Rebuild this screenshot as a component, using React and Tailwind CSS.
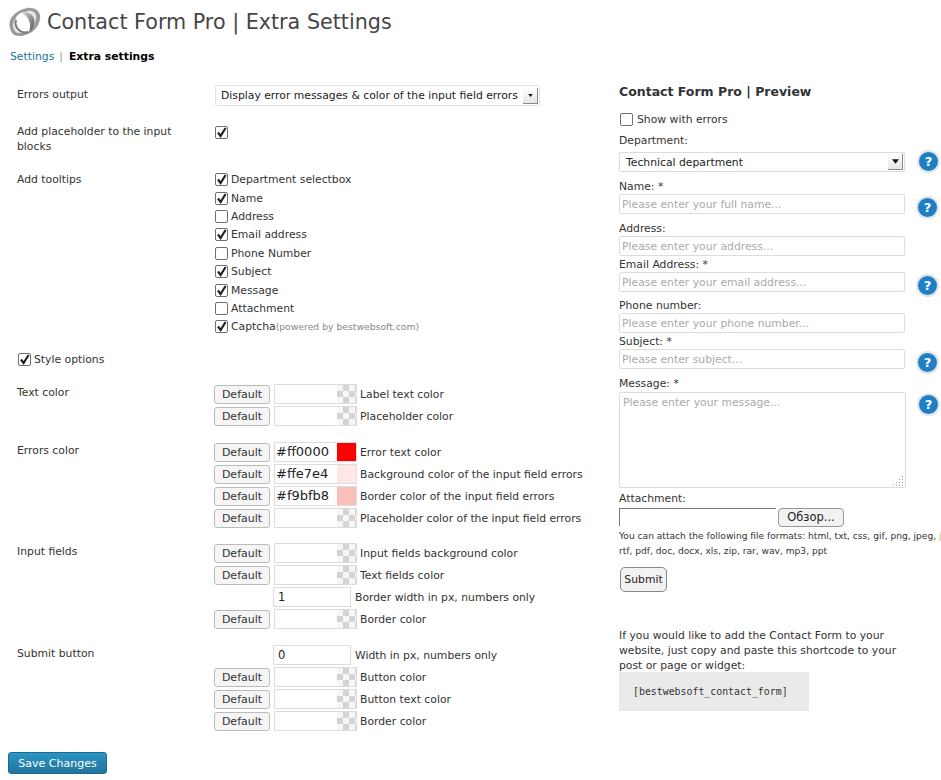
const tooltips = [
    ["Department selectbox", true],
    ["Name", true],
    ["Address", false],
    ["Email address", true],
    ["Phone Number", false],
    ["Subject", true],
    ["Message", true],
    ["Attachment", false],
];

function Box({ checked }) {
    return (
        <span className="flex h-[13px] w-[13px] shrink-0 items-center justify-center rounded-[2px] border border-[#6f6f6f] bg-white">
            {checked && (
                <svg width="11" height="11" viewBox="0 0 11 11" className="shrink-0">
                    <path d="M2 5.5 L4.6 9 L9.6 1" fill="none" stroke="#222" strokeWidth="2.2" />
                </svg>
            )}
        </span>
    );
}

function Logo() {
    return (
        <svg width="33" height="30" viewBox="0 0 33 30" className="shrink-0">
            <defs>
                <linearGradient id="wedge" x1="0" y1="0" x2="1" y2="1">
                    <stop offset="0" stopColor="#d8d8d8" />
                    <stop offset="1" stopColor="#555" />
                </linearGradient>
            </defs>
            <path d="M2 21 C-1 12 8 3 19 1 C28 0 33 5 32 12 C31 21 22 29 11 29 C6 29 3 26 2 21 Z" fill="#9a9a9a" />
            <path d="M5 20 C4 13 11 6 20 4 C26 3 29 7 28 12 C27 19 19 26 11 26 C8 26 6 24 5 20 Z" fill="#e6e6e6" />
            <ellipse cx="17" cy="15" rx="10" ry="10" fill="#fff" transform="rotate(-30 17 15)" />
            <path d="M13 6 C21 3 29 9 26 19 C25 22 23 24 21 25 C24 17 21 9 13 6 Z" fill="url(#wedge)" />
            <path d="M8 13 C6 20 12 27 20 25" fill="none" stroke="#7d7d7d" strokeWidth="2" />
        </svg>
    );
}

function SelectArrow({ className, size }) {
    return (
        <span className={`flex items-center justify-center border-r border-b border-[#8a8a8a] bg-gradient-to-b from-white to-[#e4e4e4] ${className}`}>
            <svg width={size} height={size - 2} viewBox="0 0 6 4">
                <path d="M0 0 H6 L3 4 Z" fill="#111" />
            </svg>
        </span>
    );
}

function DefaultButton() {
    return (
        <button className="h-[19px] w-[56px] shrink-0 rounded-[3px] border border-[#bbb] bg-[#f5f5f5] text-[11px] leading-none text-[#333]">
            Default
        </button>
    );
}

function ColorRow({ value, swatch, label }) {
    return (
        <div className="flex h-[22px] items-center">
            <DefaultButton />
            <div className="ml-1 flex h-[20px] w-[83px] border border-[#ddd] bg-white">
                <span className="flex-1 pl-[1px] text-[13px] leading-[18px] text-[#222]">{value}</span>
                {swatch ? (
                    <span className={`h-full w-[19px] ${swatch}`}></span>
                ) : (
                    <span className="h-full w-[19px] bg-[repeating-conic-gradient(#d4d4d4_0_25%,#f6f6f6_0_50%)] bg-[length:12px_12px]"></span>
                )}
            </div>
            <span className="ml-[3px] whitespace-nowrap">{label}</span>
        </div>
    );
}

function NumberRow({ value, label }) {
    return (
        <div className="flex h-[22px] items-center pl-[59px]">
            <div className="h-[20px] w-[78px] border border-[#ddd] bg-white pl-1 text-[11.5px] leading-[18px] text-[#222]">{value}</div>
            <span className="ml-[4px] whitespace-nowrap">{label}</span>
        </div>
    );
}

function SettingRow({ label, className, children }) {
    return (
        <div className={`flex ${className}`}>
            <div className="w-[215px] shrink-0 pl-[17px] pt-[2px]">{label}</div>
            <div className="flex-1">{children}</div>
        </div>
    );
}

function Help({ className }) {
    return (
        <span className={`flex h-[23px] w-[23px] shrink-0 items-center justify-center rounded-full border-2 border-[#e4e4e4] bg-[#1f7fc4] text-[13px] font-bold leading-none text-white ${className}`}>
            ?
        </span>
    );
}

function PreviewField({ label, placeholder, help, top }) {
    return (
        <div className={top}>
            <div className="h-[15px] leading-[15px]">{label}</div>
            <div className="flex h-[20px] items-start">
                <div className="h-[20px] w-[286px] rounded-[2px] border border-[#ddd] bg-white pl-[2px] leading-[20px] text-[#aaa]">
                    {placeholder}
                </div>
                {help && <Help className="ml-[11px] mt-[2px]" />}
            </div>
        </div>
    );
}

export default function App() {
    return (
        <div className="h-[780px] w-[941px] overflow-hidden bg-white font-['DejaVu_Sans',sans-serif] text-[10.8px] leading-[15px] text-[#333]">

            {/* HEADER */}
            <div className="flex h-[44px] items-center pl-[8px]">
                <Logo />
                <h2 className="ml-[6px] text-[20.7px] leading-[30px] text-[#464646]">
                    Contact Form Pro | Extra Settings
                </h2>
            </div>

            <div className="mt-[5px] h-[15px] pl-[10px]">
                <span className="text-[#21759b]">Settings</span>
                <span className="ml-[5px] mr-[6px] text-[#999]">|</span>
                <span className="font-bold text-black">Extra settings</span>
            </div>

            <div className="flex">

                {/* SETTINGS COLUMN */}
                <div className="w-[619px] shrink-0">

                    <SettingRow label="Errors output" className="mt-[21px] h-[21px] items-start">
                        <div className="flex h-[21px] w-[325px] items-center justify-between rounded-[2px] border border-[#e3e3e3] pl-[5px] pr-[1px] text-[#222]">
                            <span className="whitespace-nowrap">Display error messages &amp; color of the input field errors</span>
                            <SelectArrow className="h-[16px] w-[15px]" size={5} />
                        </div>
                    </SettingRow>

                    <SettingRow label={<div className="w-[170px]">Add placeholder to the input blocks</div>} className="mt-[16px]">
                        <div className="pt-[4px]"><Box checked /></div>
                    </SettingRow>

                    <SettingRow label="Add tooltips" className="mt-[16px]">
                        <div className="pt-[0.6px]">
                            {tooltips.map(([name, checked]) => (
                                <div key={name} className="flex h-[18.4px] items-center gap-[3px]">
                                    <Box checked={checked} />
                                    <span>{name}</span>
                                </div>
                            ))}
                            <div className="flex h-[18.4px] items-center gap-[3px]">
                                <Box checked />
                                <span>Captcha</span>
                                <span className="-ml-[3px] text-[9.25px] text-[#888]">(powered by bestwebsoft.com)</span>
                            </div>
                        </div>
                    </SettingRow>

                    <div className="mt-[14px] flex h-[18px] items-center gap-[3px] pl-[18px]">
                        <Box checked />
                        <span>Style options</span>
                    </div>

                    <SettingRow label="Text color" className="mt-[15px]">
                        <div className="-ml-[1px]">
                            <ColorRow label="Label text color" />
                            <ColorRow label="Placeholder color" />
                        </div>
                    </SettingRow>

                    <SettingRow label="Errors color" className="mt-[14px]">
                        <div className="-ml-[1px]">
                            <ColorRow value="#ff0000" swatch="bg-[#ff0000]" label="Error text color" />
                            <ColorRow value="#ffe7e4" swatch="bg-[#ffe7e4]" label="Background color of the input field errors" />
                            <ColorRow value="#f9bfb8" swatch="bg-[#f9bfb8]" label="Border color of the input field errors" />
                            <ColorRow label="Placeholder color of the input field errors" />
                        </div>
                    </SettingRow>

                    <SettingRow label="Input fields" className="mt-[13px]">
                        <div className="-ml-[1px]">
                            <ColorRow label="Input fields background color" />
                            <ColorRow label="Text fields color" />
                            <NumberRow value="1" label="Border width in px, numbers only" />
                            <ColorRow label="Border color" />
                        </div>
                    </SettingRow>

                    <SettingRow label="Submit button" className="mt-[14px]">
                        <div className="-ml-[1px]">
                            <NumberRow value="0" label="Width in px, numbers only" />
                            <ColorRow label="Button color" />
                            <ColorRow label="Button text color" />
                            <ColorRow label="Border color" />
                        </div>
                    </SettingRow>

                    <button className="ml-[8px] mt-[20px] h-[22px] w-[99px] rounded-[3px] border border-[#1e6a8d] bg-gradient-to-b from-[#2a95c5] to-[#21759b] text-[11px] text-white">
                        Save Changes
                    </button>
                </div>

                {/* PREVIEW COLUMN */}
                <div className="w-[322px] shrink-0">
                    <h3 className="mt-[20px] text-[12.5px] font-bold leading-[16px] text-[#333]">
                        Contact Form Pro | Preview
                    </h3>

                    <div className="mt-[12px] flex h-[15px] items-center gap-[4px] pl-[1px]">
                        <Box />
                        <span>Show with errors</span>
                    </div>

                    <div className="mt-[6px] h-[15px]">Department:</div>
                    <div className="mt-[4px] flex h-[20px] items-start">
                        <div className="flex h-[20px] w-[286px] items-center justify-between rounded-[2px] border border-[#ddd] pl-[6px] pr-[1px] text-[#222]">
                            <span>Technical department</span>
                            <SelectArrow className="h-[16px] w-[15px]" size={7} />
                        </div>
                        <Help className="-mt-[2px] ml-[12px]" />
                    </div>

                    <PreviewField top="mt-[7px]" label="Name: *" placeholder="Please enter your full name..." help />
                    <PreviewField top="mt-[7px]" label="Address:" placeholder="Please enter your address..." />
                    <PreviewField top="mt-[1px]" label="Email Address: *" placeholder="Please enter your email address..." help />
                    <PreviewField top="mt-[6px]" label="Phone number:" placeholder="Please enter your phone number..." />
                    <PreviewField top="mt-[1px]" label="Subject: *" placeholder="Please enter subject..." help />

                    <div className="mt-[7px] h-[15px]">Message: *</div>
                    <div className="mt-[1px] flex items-start">
                        <div className="relative h-[96px] w-[287px] rounded-[2px] border border-[#ddd] pl-[3px] pt-[2px] text-[#aaa]">
                            Please enter your message...
                            <svg width="12" height="12" viewBox="0 0 12 12" className="absolute bottom-[1px] right-[1px]">
                                <path d="M10.5 2 V3 M10.5 5 V6 M7.5 5 V6 M10.5 8 V9 M7.5 8 V9 M4.5 8 V9 M10.5 10.5 V11.5 M7.5 10.5 V11.5 M4.5 10.5 V11.5 M1.5 10.5 V11.5" stroke="#999" strokeWidth="1" />
                            </svg>
                        </div>
                        <Help className="ml-[11px] mt-[1px]" />
                    </div>

                    <div className="mt-[3px] h-[15px]">Attachment:</div>
                    <div className="mt-[1px] flex h-[20px] items-center">
                        <div className="h-[18px] w-[157px] border-t border-l border-[#777]"></div>
                        <button className="ml-[2px] h-[19px] w-[66px] rounded-[4px] border border-[#999] bg-[#f2f2f2] text-[11.5px] text-[#222]">
                            Обзор...
                        </button>
                    </div>

                    <div className="mt-[2px] w-[340px] whitespace-nowrap text-[9.1px] leading-[15px]">
                        <div>You can attach the following file formats: html, txt, css, gif, png, jpeg, <span className="text-[#e0b040]">jpg,</span></div>
                        <div>rtf, pdf, doc, docx, xls, zip, rar, wav, mp3, ppt</div>
                    </div>

                    <button className="ml-[1px] mt-[8px] h-[25px] w-[47px] rounded-[5px] border border-[#888] bg-[#f2f2f2] text-[10.8px] text-[#222]">
                        Submit
                    </button>

                    <p className="mt-[36px] w-[300px] leading-[15px]">
                        If you would like to add the Contact Form to your website, just copy and paste this shortcode to your post or page or widget:
                    </p>
                    <div className="-mt-[1px] flex h-[39px] w-[190px] items-center bg-[#eaeaea] pl-[14px] font-['DejaVu_Sans_Mono',monospace] text-[9.9px] text-[#333]">
                        [bestwebsoft_contact_form]
                    </div>
                </div>
            </div>
        </div>
    );
}
